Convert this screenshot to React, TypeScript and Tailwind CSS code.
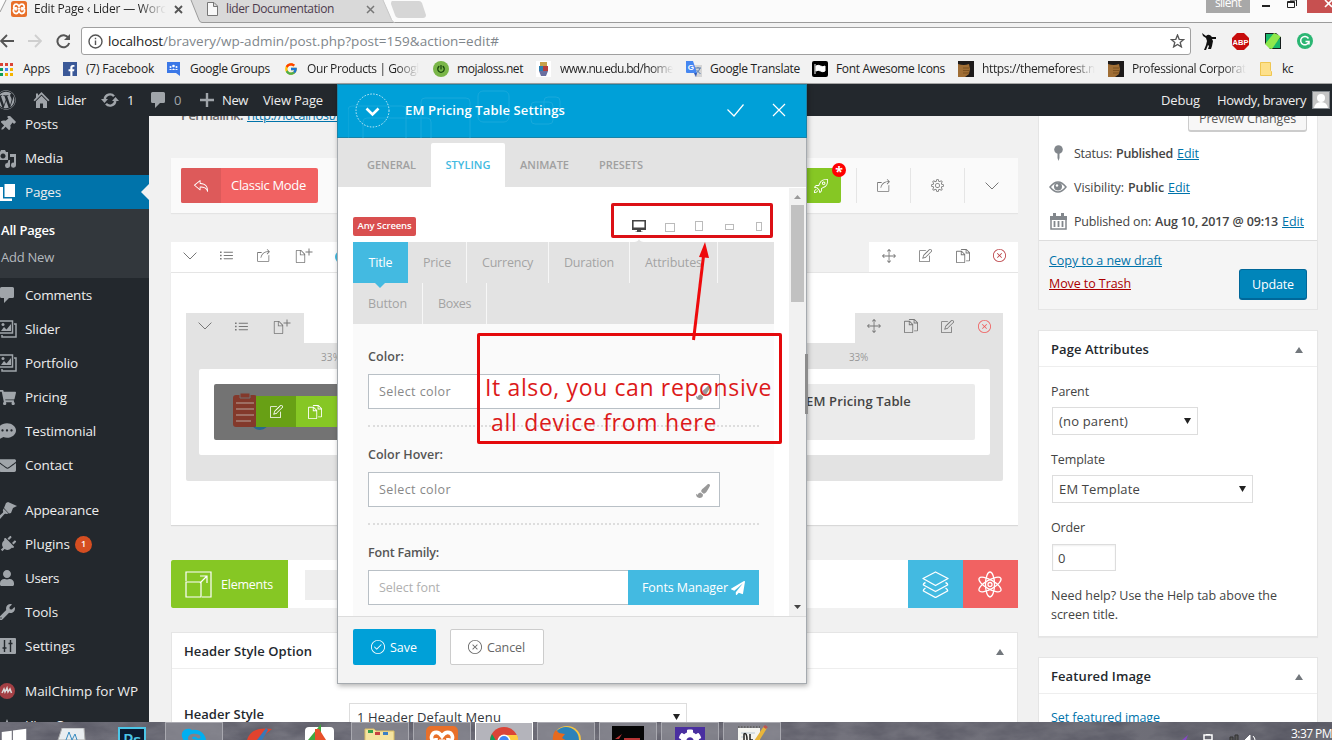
import React, { useLayoutEffect, useRef } from "react";
import {
  SlNote, SlDocs, SlClose, SlCursorMove, SlList, SlShareAlt, SlSettings,
  SlRocket, SlCheck, SlActionUndo, SlDoc,
} from "react-icons/sl";
import {
  FaWordpress, FaThumbtack, FaUser, FaWrench, FaPlug, FaEnvelope, FaShoppingCart,
  FaCommentDots, FaPaintBrush, FaPaperPlane, FaSkype, FaWindows, FaFacebookF, FaPowerOff, FaCog,
} from "react-icons/fa";
import { FcGoogle } from "react-icons/fc";

/* Single-line label that spreads its letters over the given width. */
function T({ w, c = "", children }: { w: number; c?: string; children: string }) {
  const ref = useRef<HTMLSpanElement>(null);
  useLayoutEffect(() => {
    const el = ref.current;
    if (!el) return;
    el.style.letterSpacing = "0px";
    const natural = el.getBoundingClientRect().width;
    el.style.letterSpacing = `${(w - natural) / children.length}px`;
  }, [w, children]);
  return (
    <span ref={ref} className={`inline-block shrink-0 whitespace-pre ${c}`}>
      {children}
    </span>
  );
}

/* ---------- small drawings ---------- */

const Xampp = ({ s = 16 }: { s?: number }) => (
  <svg width={s} height={s} viewBox="0 0 16 16" className="shrink-0">
    <rect width="16" height="16" rx="2.500" fill="#e8702a" />
    <path d="M5.200 3.200C6.800 3.200 7.500 4.500 8 5.200 8.500 4.500 9.200 3.200 10.800 3.200A2.400 2.400 0 0 1 12.300 7.500 2.700 2.700 0 0 1 10.800 12.500C9.200 12.500 8.500 11 8 10 7.500 11 6.800 12.500 5.200 12.500A2.700 2.700 0 0 1 3.700 7.500 2.400 2.400 0 0 1 5.200 3.200zM5 6v3.500M11 6v3.500M6.500 7.700h3" fill="none" stroke="#fff" strokeWidth="1.800" />
  </svg>
);

const Chevron = ({ c = "#777", s = 14 }: { c?: string; s?: number }) => (
  <svg width={s} height={s / 2 + 1} viewBox="0 0 14 8" fill="none" stroke={c}>
    <path d="M.6.6L7 7 13.400.6" />
  </svg>
);

const Lines = () => <SlList size={13} />;

const DocPlus = () => (
  <span className="flex shrink-0">
    <SlDoc size={13} className="-ml-1 mt-0.5" />
    <svg width="8" height="8" viewBox="0 0 8 8" stroke="#777" className="-ml-0.5">
      <path d="M4 .5v7M.5 4h7" />
    </svg>
  </span>
);

const Up = ({ c = "#72777c" }: { c?: string }) => (
  <svg width="8" height="6" viewBox="0 0 8 6" fill={c} className="shrink-0 translate-y-px"><path d="M4 0l4 6H0z" /></svg>
);
const Down = () => (
  <svg width="7" height="6" viewBox="0 0 7 6" fill="#222" className="shrink-0"><path d="M0 0h7L3.500 6z" /></svg>
);

const HomeIcon = () => (
  <svg width="17" height="16" viewBox="0 0 17 16" fill="#a0a5aa">
    <path d="M8.500 0L16.500 8.200l-1.300 1L8.500 2.600 1.800 9.200l-1.300-1L3 5.600V1.500h2v2.100z" />
    <path d="M3 9.200l5.500-5.400L14 9.200V16h-4v-4.500H7V16H3z" />
  </svg>
);
const UpdateIcon = () => (
  <svg width="18" height="14" viewBox="0 0 18 14" fill="none" stroke="#a0a5aa" strokeWidth="2.400">
    <path d="M3.700 6A5.300 5.300 0 0 1 13 3.300M14.300 8A5.300 5.300 0 0 1 5 10.700" />
    <path d="M0 6h7L3.500 10zM11 8h7l-3.500-4z" fill="#a0a5aa" stroke="none" />
  </svg>
);
const CommentIcon = ({ s = 14 }: { s?: number }) => (
  <svg width={s} height={s + 2} viewBox="0 0 14 16" fill="#a0a5aa">
    <path d="M1.500 0h11A1.500 1.500 0 0 1 14 1.500v8a1.500 1.500 0 0 1-1.500 1.500H9l-5 5v-5H1.500A1.500 1.500 0 0 1 0 9.500v-8A1.500 1.500 0 0 1 1.500 0z" />
  </svg>
);
const MediaIcon = () => (
  <svg width="20" height="19" viewBox="0 0 20 19" fill="#a0a5aa">
    <path fillRule="evenodd" d="M1 3h2l1-2h4l1 2h2v8H1zM6 4.500a2.500 2.500 0 1 0 .01 0z" />
    <path d="M13 5h6v11a2.500 2.500 0 1 1-2-2.300V8h-4zM11.500 11h1.500v5a2.500 2.500 0 1 1-2.500-2z" />
  </svg>
);
const PagesIcon = () => (
  <svg width="19" height="17" viewBox="0 0 19 17" fill="#fff">
    <path d="M6.500 0H17v13H6.500z" /><path d="M1 3h4v11.500h9V17H1z" />
  </svg>
);
const GalleryIcon = () => (
  <svg width="19" height="18" viewBox="0 0 19 18" fill="none" stroke="#a0a5aa" strokeWidth="1.500">
    <path d="M1 1h13.500v12H1zM16 4h2v13H4v-2" />
    <path d="M3 11l3-4 2.500 2.500L13 4v7z" fill="#a0a5aa" stroke="none" />
    <circle cx="5" cy="4.500" r="1.500" fill="#a0a5aa" stroke="none" />
  </svg>
);
const BrushIcon = () => (
  <svg width="19" height="17" viewBox="0 0 19 17" fill="#a0a5aa">
    <path d="M8 1l2-1 9 4-4 2-2 5-2 .5L6 6z" /><path d="M5.500 6.500l5 5-2 .5c-1-.5-1.800-.5-2.500.5L2 17l-2-2 4.500-4c.8-.8.8-1.500.3-2.500z" />
  </svg>
);
const SlidersIcon = () => (
  <svg width="17" height="16" viewBox="0 0 17 16">
    <rect width="17" height="16" rx="1" fill="#a0a5aa" />
    <path d="M5.500 2v12M3.500 10h4M11.500 2v12M9.500 5.500h4" stroke="#23282d" strokeWidth="1.400" />
  </svg>
);

/* ---------- browser chrome ---------- */

function TabStrip() {
  return (
    <div className="relative h-[23px] shrink-0 bg-[#fbfbfb]">
      <svg className="absolute left-0 top-0" width="1332" height="23" viewBox="0 0 1332 23">
        <path d="M190 0h193l9 20c.5 1 1 2.500 2 2.500H200z" fill="#d9d9d9" />
        <path d="M392 1h27q2 0 3 2l4 12q0 3-3 3h-24q-3 0-4-3l-4-11q0-3 1-3z" fill="#d6d6d6" />
        <path d="M0 12L6 0h185l8 20q1 2.500 3 3H0z" fill="#f2f2f2" />
        <path d="M0 12L6 0M191 0l8 20q1 2.500 3 2.500H1332" fill="none" stroke="#9b9b9b" />
        <path d="M383 0l8.500 19.500q1 2.500 3 3" fill="none" stroke="#c8c8c8" />
      </svg>
      <div className="relative flex h-[18px] items-center text-[12px] leading-[18px]">
        <div className="ml-[11px] mr-[7px]"><Xampp /></div>
        <div className="w-[132px] overflow-hidden bg-linear-to-r from-[#222] from-80% to-transparent bg-clip-text text-transparent">
          <T w={132}>Edit Page ‹ Lider — Worc</T>
        </div>
        <svg className="ml-[8px]" width="9" height="9" viewBox="0 0 9 9" stroke="#555" strokeWidth="1.800"><path d="M1 1l7 7M8 1L1 8" /></svg>
        <svg className="ml-[24px]" width="11" height="14" viewBox="0 0 11 14" fill="#f8f8f8" stroke="#777"><path d="M.5.5H7L10.500 4v9.500H.5zM6.500.5v4h4" /></svg>
        <T w={108} c="ml-[8px] text-[#4d3b4d]">lider Documentation</T>
        <svg className="ml-[32px]" width="9" height="9" viewBox="0 0 9 9" stroke="#777" strokeWidth="1.500"><path d="M1 1l7 7M8 1L1 8" /></svg>
        <div className="ml-auto flex h-[13px] w-[44px] justify-center self-start bg-[#a8a8a8] leading-[6px] text-white">
          <T w={26}>silent</T>
        </div>
        <div className="ml-[12px] mr-[17px] mt-[-7px] h-[2px] w-[8px] bg-[#222]" />
        <svg width="11" height="9" viewBox="0 0 11 9" fill="none" stroke="#222" className="mb-[10px] mr-[9px]"><path d="M.5 1.500h7v6h-7zM.5 2.500h7M3 0h6.500v6" /></svg>
        <div className="flex h-[13px] w-[25px] justify-end self-start overflow-hidden bg-[#c75050]">
          <svg width="8" height="8" viewBox="0 0 8 8" stroke="#fff" strokeWidth="1.600"><path d="M1 0l7 7M8 0L1 7" /></svg>
        </div>
      </div>
    </div>
  );
}

function Toolbar() {
  return (
    <div className="flex h-[36px] shrink-0 items-center bg-[#f2f2f2]">
      <svg width="14" height="14" viewBox="0 0 14 14" fill="none" stroke="#555" strokeWidth="1.800"><path d="M14 7H1M7 1L1 7l6 6" /></svg>
      <svg className="ml-[14px]" width="14" height="14" viewBox="0 0 14 14" fill="none" stroke="#cfcfcf" strokeWidth="1.800"><path d="M0 7h13M7 1l6 6-6 6" /></svg>
      <svg className="ml-[14px]" width="15" height="15" viewBox="0 0 15 15" fill="none" stroke="#555" strokeWidth="2"><path d="M12.500 4A6 6 0 1 0 13.200 9" /><path d="M14 0v6H8z" fill="#555" stroke="none" /></svg>
      <div className="ml-[10px] flex h-[28px] w-[1110px] items-center rounded-[3px] border border-[#a0a0a0] bg-white pl-[6px] pr-[5px] text-[13.500px]">
        <svg width="15" height="15" viewBox="0 0 15 15" fill="none" stroke="#555" strokeWidth="1.400"><circle cx="7.500" cy="7.500" r="6.500" /><path d="M7.500 6.500V11M7.500 3.700v1.500" /></svg>
        <T w={55} c="ml-[5px] text-[#222]">localhost</T>
        <T w={336} c="text-[#80868b]">/bravery/wp-admin/post.php?post=159&amp;action=edit#</T>
        <svg className="ml-auto" width="15" height="14" viewBox="0 0 15 14" fill="none" stroke="#555" strokeWidth="1.300"><path d="M7.500 1l1.700 4.300 4.600.2-3.600 2.900 1.200 4.500-3.900-2.500-3.900 2.500 1.200-4.500L1.200 5.500l4.600-.2z" /></svg>
      </div>
      <svg className="ml-[11px]" width="16" height="17" viewBox="0 0 16 17" fill="#111"><path d="M0 0l4 3q3-3 6 1l4 0v2l-4 0 1 2-1 5-1 3-3 0 1-3-1-1-2 5H2l2-5 1-4-1-3-3-2z" /></svg>
      <svg className="ml-[14px]" width="17" height="17" viewBox="0 0 17 17"><path d="M5 0h7l5 5v7l-5 5H5l-5-5V5z" fill="#c70d0d" /><text x="8.500" y="11.500" textAnchor="middle" fontSize="7.500" fontWeight="700" fill="#fff" fontFamily="Liberation Sans, sans-serif">ABP</text></svg>
      <svg className="ml-[16px]" width="16" height="16" viewBox="0 0 16 16"><path d="M0 0h16v16H0z" fill="#151d1c" /><path d="M1 12V1h9zM6 15L15 5v10z" fill="#17b86b" /><path d="M0 11L9 0l7 3-9 13-5-1z" fill="#8ee84c" /><path d="M0 16v-5l5 5zM16 0v4l-5-4z" fill="#f2f2f2" /></svg>
      <svg className="ml-[16px]" width="16" height="16" viewBox="0 0 16 16"><circle cx="8" cy="8" r="8" fill="#2bb673" /><path d="M11.500 5.500A4.200 4.200 0 1 0 12 8.500H8.500M12 8.500v3" fill="none" stroke="#fff" strokeWidth="1.500" /></svg>
    </div>
  );
}

const fade = "bg-linear-to-r from-[#222] from-80% to-transparent bg-clip-text text-transparent";

const Wood = () => (
  <svg width="16" height="16" viewBox="0 0 16 16"><path d="M0 0h16v16H0z" fill="#1d1a1a" /><path d="M0 3q6 2 11 0l1 5-1 5-4 3H0z" fill="#a06e35" /><path d="M5 7h6M5 9.500h6M5 12h6" stroke="#7b5120" /></svg>
);

function Bookmarks() {
  const apps = ["#db4437", "#db4437", "#db4437", "#0f9d58", "#4285f4", "#f4b400", "#0f9d58", "#f4b400", "#f4b400"];
  return (
    <div className="flex h-[25px] shrink-0 items-center border-b border-[#a5a5a5] bg-[#f2f2f2] pb-[4px] text-[12px] leading-[18px] text-[#222]">
      <div className="grid w-[13px] grid-cols-3 gap-x-[2px] gap-y-[2px]">
        {apps.map((color, i) => <i key={i} className="size-[3px]" style={{ background: color }} />)}
      </div>
      <T w={27} c="ml-[10px]">Apps</T>
      <div className="ml-[13px] flex size-[14px] items-end justify-end bg-[#3b5998] text-white"><FaFacebookF size={11} /></div>
      <T w={68} c="ml-[9px]">(7) Facebook</T>
      <svg className="ml-[13px]" width="13" height="16" viewBox="0 0 13 16"><path d="M0 1h13v14l-4-3H0z" fill="#3b78e7" /><g fill="#fff"><circle cx="3.500" cy="6" r="1" /><circle cx="6.500" cy="5" r="1.300" /><circle cx="9.500" cy="6" r="1" /><path d="M2 9q1.500-2 3 0zM5 9q1.500-3 3 0zM8 9q1.500-2 3 0z" /></g></svg>
      <T w={80} c="ml-[10px]">Google Groups</T>
      <FcGoogle size={14} className="ml-[14px]" />
      <div className={`ml-[9px] w-[112px] overflow-hidden ${fade}`}><T w={112}>Our Products | Googl</T></div>
      <div className="ml-[14px] flex size-[16px] items-center justify-center rounded-full bg-[#7ab648] text-[#17470b]"><FaPowerOff size={8} /></div>
      <T w={66} c="ml-[8px]">mojaloss.net</T>
      <svg className="ml-[13px]" width="15" height="16" viewBox="0 0 15 16"><path d="M0 0h15v16H0z" fill="#fff" /><path d="M4 1h7v4H4z" fill="#c7a14a" /><path d="M3 5h4v5H3z" fill="#2c7fb0" /><path d="M7 5h5v5H7z" fill="#b43d3d" /><path d="M3 10h9l-2 5H5z" fill="#6a6fa0" /></svg>
      <div className={`ml-[9px] w-[113px] overflow-hidden ${fade}`}><T w={113}>www.nu.edu.bd/home</T></div>
      <svg className="ml-[13px]" width="16" height="16" viewBox="0 0 16 16"><path d="M6 4h10v12H9z" fill="#d5d5d5" /><path d="M9 7h6M12 6v1M14 7q-1 4-4 5M10.500 9l4 4" stroke="#5b7fae" fill="none" /><path d="M0 0h7l4 12H1q-1 0-1-1z" fill="#4687f1" /><path d="M8 12h3l-1 4z" fill="#3059b8" /><text x="4.800" y="9" textAnchor="middle" fontSize="8" fontWeight="700" fill="#fff" fontFamily="Liberation Sans, sans-serif">G</text></svg>
      <T w={90} c="ml-[8px]">Google Translate</T>
      <svg className="ml-[12px]" width="16" height="16" viewBox="0 0 16 16"><rect width="16" height="16" rx="2" fill="#000" /><path d="M3 3v10M4 5q2-1.500 4.500 0T13 5v5q-2 1.500-4.500 0T4 10z" fill="#fff" stroke="#fff" /></svg>
      <T w={109} c="ml-[8px]">Font Awesome Icons</T>
      <div className="ml-[13px]"><Wood /></div>
      <div className={`ml-[8px] w-[113px] overflow-hidden ${fade}`}><T w={113}>https://themeforest.n</T></div>
      <div className="ml-[13px]"><Wood /></div>
      <div className={`ml-[8px] w-[114px] overflow-hidden ${fade}`}><T w={114}>Professional Corporat</T></div>
      <svg className="ml-[14px]" width="12" height="14" viewBox="0 0 12 14"><path d="M.5.5h10v8l1 1v4H.5z" fill="#fde08a" stroke="#efc652" /></svg>
      <T w={11} c="ml-[10px]">kc</T>
    </div>
  );
}

/* ---------- WordPress admin ---------- */

function AdminBar() {
  return (
    <div className="flex h-[32px] shrink-0 items-center bg-[#23282d] text-[13px] text-[#eee] [&_span]:translate-y-px">
      <FaWordpress size={20} className="-ml-[4px] text-[#a0a5aa]" />
      <div className="ml-[17px]"><HomeIcon /></div>
      <T w={29} c="ml-[7px]">Lider</T>
      <div className="ml-[15px]"><UpdateIcon /></div>
      <T w={6} c="ml-[8px]">1</T>
      <div className="ml-[18px]"><CommentIcon /></div>
      <T w={7} c="ml-[9px] text-[#a0a5aa]">0</T>
      <svg className="ml-[19px]" width="14" height="14" viewBox="0 0 14 14" stroke="#a0a5aa" strokeWidth="2.400"><path d="M7 0v14M0 7h14" /></svg>
      <T w={26} c="ml-[8px]">New</T>
      <T w={60} c="ml-[15px]">View Page</T>
      <T w={39} c="ml-auto">Debug</T>
      <T w={89} c="ml-[17px]">Howdy, bravery</T>
      <svg className="ml-[6px] mr-[2px]" width="18" height="18" viewBox="0 0 18 18"><path d="M0 0h18v18H0z" fill="#82878c" /><path d="M1 1h16v16H1z" fill="#c5c5c5" /><circle cx="9" cy="7" r="4" fill="#fff" /><path d="M2 17q1-6 7-6t7 6z" fill="#fff" /></svg>
    </div>
  );
}

function MenuItem({ icon, label, w, children }: { icon: React.ReactNode; label: string; w: number; children?: React.ReactNode }) {
  return (
    <div className="flex h-[34px] shrink-0 items-center text-[#a0a5aa]">
      <div className="-ml-[3px] flex w-[20px] shrink-0 justify-center">{icon}</div>
      <T w={w} c="ml-[8px] text-[#eee]">{label}</T>
      {children}
    </div>
  );
}

function Sidebar() {
  return (
    <div className="w-[149px] shrink-0 overflow-hidden bg-[#23282d] text-[13.500px]">
      <div className="-mt-[9px] flex flex-col">
        <MenuItem icon={<FaThumbtack size={16} className="rotate-45" />} label="Posts" w={33} />
        <MenuItem icon={<MediaIcon />} label="Media" w={38} />
        <div className="flex justify-between bg-[#0073aa]">
          <MenuItem icon={<PagesIcon />} label="Pages" w={36} />
          <svg width="8" height="34" viewBox="0 0 8 34" fill="#f1f1f1"><path d="M8 9v16L0 17z" /></svg>
        </div>
        <div className="flex h-[69px] flex-col justify-center bg-[#32373c] pl-px leading-[27px] text-[13px]">
          <T w={54} c="self-start font-semibold text-white">All Pages</T>
          <T w={53} c="self-start text-[#b4b9be]">Add New</T>
        </div>
        <MenuItem icon={<CommentIcon />} label="Comments" w={67} />
        <MenuItem icon={<GalleryIcon />} label="Slider" w={35} />
        <MenuItem icon={<GalleryIcon />} label="Portfolio" w={53} />
        <MenuItem icon={<FaShoppingCart size={17} />} label="Pricing" w={42} />
        <MenuItem icon={<FaCommentDots size={18} />} label="Testimonial" w={71} />
        <MenuItem icon={<FaEnvelope size={17} />} label="Contact" w={48} />
        <div className="h-[11px]" />
        <MenuItem icon={<BrushIcon />} label="Appearance" w={74} />
        <MenuItem icon={<FaPlug size={17} className="rotate-45" />} label="Plugins" w={45}>
          <div className="ml-[5px] flex size-[17px] items-center justify-center rounded-full bg-[#d54e21] text-[9px] font-semibold text-white">1</div>
        </MenuItem>
        <MenuItem icon={<FaUser size={16} />} label="Users" w={34} />
        <MenuItem icon={<FaWrench size={16} />} label="Tools" w={33} />
        <MenuItem icon={<SlidersIcon />} label="Settings" w={50} />
        <div className="h-[11px]" />
        <MenuItem
          icon={<svg width="16" height="16" viewBox="0 0 16 16"><circle cx="8" cy="8" r="8" fill="#a33f44" /><path d="M3 10l2-4 1 3 2-4 1 4 2-3 1.500 4" fill="none" stroke="#ddd" strokeWidth="1.500" /></svg>}
          label="MailChimp for WP" w={113}
        />
        <MenuItem icon={<svg width="10" height="12" viewBox="0 0 10 12" fill="#a0a5aa"><path d="M5 0l2 5 3-2-1 8H1L0 3l3 2z" /></svg>} label="King Composer" w={94} />
      </div>
    </div>
  );
}

const Cell = ({ children, c = "" }: { children: React.ReactNode; c?: string }) => (
  <div className={`flex w-[37px] shrink-0 items-center justify-center text-[#777] ${c}`}>{children}</div>
);

function Editor() {
  return (
    <div className="flex w-[869px] shrink-0 flex-col overflow-hidden pl-[22px]">
      <div className="-mt-[10px] flex h-[20px] shrink-0 items-center pl-[10px] text-[13px] text-[#666]">
        <T w={62} c="font-semibold">Permalink:</T>
        <T w={180} c="ml-[4px] text-[#0073aa] underline">http://localhost/bravery/pricing/</T>
      </div>

      <div className="mt-[32px] flex h-[55px] shrink-0 items-center bg-[#fafafa] pl-[10px] shadow-[0_1px_1px_rgba(0,0,0,.05)]">
        <div className="flex h-[35px] w-[137px] overflow-hidden rounded-[2px] bg-[#f16262] text-[13px] leading-[34px] text-white">
          <div className="flex w-[40px] items-center justify-center bg-[#dd5a5a]"><SlActionUndo size={14} /></div>
          <T w={75} c="ml-[10px]">Classic Mode</T>
        </div>
        <div className="relative ml-auto mr-[15px] flex h-[35px] w-[61px] items-center justify-end rounded-[2px] bg-[#86c724] pr-[13px] text-white">
          <SlRocket size={14} />
          <div className="absolute -right-[5px] -top-[5px] flex size-[14px] justify-center rounded-full bg-[#f00] text-[14px] font-bold leading-[18px]">*</div>
        </div>
        <div className="flex h-[35px] w-[54px] items-center justify-center border-l border-[#e5e5e5] text-[#777]"><SlShareAlt size={13} /></div>
        <div className="flex h-[35px] w-[54px] items-center justify-center border-l border-[#e5e5e5] text-[#777]"><SlSettings size={13} /></div>
        <div className="flex h-[35px] w-[54px] items-center justify-center border-l border-[#e5e5e5]"><Chevron /></div>
      </div>

      <div className="mt-[29px] flex h-[30px] shrink-0 justify-between">
        <div className="flex w-[300px] bg-white pb-[3px]">
          <Cell><Chevron /></Cell><Cell><Lines /></Cell><Cell><SlShareAlt size={13} /></Cell>
          <Cell c="ml-[5px]"><DocPlus /></Cell>
          <i className="ml-[11px] mt-[9px] size-[12px] rounded-full bg-[#43bae1]" />
        </div>
        <div className="flex w-[149px] bg-white pb-[3px] pl-px">
          <Cell><SlCursorMove size={14} /></Cell><Cell><SlNote size={13} /></Cell><Cell><SlDocs size={14} /></Cell>
          <Cell><SlClose size={13} className="text-[#b8383d]" /></Cell>
        </div>
      </div>

      <div className="flex h-[253px] shrink-0 flex-col border-t border-[#e5e5e5] bg-white px-[15px] pt-[40px] shadow-[0_1px_1px_rgba(0,0,0,.1)]">
        <div className="flex h-[30px] shrink-0 justify-between">
          <div className="flex w-[118px] bg-[#e3e3e3] pb-[4px]">
            <Cell><Chevron /></Cell><Cell><Lines /></Cell><Cell c="ml-[5px]"><DocPlus /></Cell>
          </div>
          <div className="flex w-[148px] bg-[#e3e3e3] pb-[4px]">
            <Cell><SlCursorMove size={14} /></Cell><Cell><SlDocs size={14} /></Cell><Cell><SlNote size={13} /></Cell>
            <Cell><SlClose size={13} className="text-[#f05b5b]" /></Cell>
          </div>
        </div>
        <div className="flex h-[138px] flex-col rounded-b-[2px] bg-[#e3e3e3] px-[13px] pb-[26px]">
          <div className="flex h-[26px] shrink-0 items-center justify-between pl-[122px] pr-[122px] pt-[2px] text-[10px] text-[#999]">
            <T w={20}>33%</T><T w={19}>33%</T>
          </div>
          <div className="flex flex-1 justify-between rounded-[2px] bg-white p-[15px]">
            <div className="flex w-[300px] rounded-[2px] bg-[#737373] pl-[18px]">
              <svg className="mt-[8px] shrink-0" width="38" height="40" viewBox="0 0 38 40">
                <circle cx="28" cy="29" r="9" fill="#286a8c" />
                <rect x="1" y="3" width="24" height="32" rx="3" fill="#83392b" />
                <path d="M8 1h10v5H8z" fill="#83392b" stroke="#737373" />
                <path d="M4 11h18M4 17h18M4 23h18M4 29h15" stroke="#a88178" strokeWidth="1.300" />
              </svg>
              <div className="-ml-[14px] mt-[12px] flex h-[31px] text-white">
                <div className="relative flex w-[40px] items-center justify-center bg-[#68a015]"><SlNote size={13} /></div>
                <div className="relative flex w-[60px] items-center bg-[#86c724] pl-[12px]"><SlDocs size={14} /></div>
              </div>
            </div>
            <div className="flex w-[300px] rounded-[2px] bg-[#ebebeb] pl-[131px] pt-[8px] text-[13px] font-semibold text-[#444]">
              <T w={105}>EM Pricing Table</T>
            </div>
          </div>
        </div>
      </div>

      <div className="mt-[35px] flex h-[48px] w-[847px] shrink-0 bg-white text-white">
        <div className="flex w-[117px] items-center rounded-l-[2px] bg-[#86c724] pl-[14px] text-[12.500px] font-medium">
          <svg width="27" height="27" viewBox="0 0 27 27" fill="none" stroke="#fff" strokeWidth="1.200"><path d="M1 10V1h25v25H17M1 11h15v15H1zM15 5h7v7M22 5l-7 7" /></svg>
          <T w={52} c="ml-[9px] translate-y-px">Elements</T>
        </div>
        <div className="ml-[17px] mt-[10px] h-[30px] w-[440px] bg-[#eee]" />
        <div className="ml-auto flex w-[55px] items-center justify-center bg-[#43bae1]">
          <svg width="27" height="27" viewBox="0 0 27 27" fill="none" stroke="#fff" strokeWidth="1.400" strokeLinejoin="round">
            <path d="M13.500 1L26 7.500 13.500 14.500 1 7.500zM3.500 11.500Q1 12.500 1.500 14L13.500 20.500 25.500 14Q26 12.500 23.500 11.500M3.500 17Q1 18.500 1.500 20L13.500 26.500 25.500 20Q26 18.500 23.500 17" />
          </svg>
        </div>
        <div className="flex w-[55px] items-center justify-center bg-[#f16262] pr-[2px]">
          <svg width="26" height="27" viewBox="-13 -13.500 26 27" fill="none" stroke="#fff" strokeWidth="1.300">
            <ellipse rx="4.500" ry="12.500" /><ellipse rx="4.500" ry="12.500" transform="rotate(60)" /><ellipse rx="4.500" ry="12.500" transform="rotate(-60)" /><circle r="2" />
          </svg>
        </div>
      </div>

      <div className="mt-[24px] flex h-[200px] w-[847px] shrink-0 flex-col border border-[#e5e5e5] bg-white text-[13px] text-[#23282d] [&_span]:translate-y-px">
        <div className="flex h-[36px] shrink-0 items-center justify-between border-b border-[#eee] pl-[12px] pr-[13px] font-semibold">
          <T w={128}>Header Style Option</T><Up />
        </div>
        <div className="flex pl-[12px] pt-[34px]">
          <T w={80} c="mt-[1px] font-semibold">Header Style</T>
          <div className="ml-[85px] flex h-[28px] w-[338px] items-center justify-between border border-[#ddd] pl-[7px] pr-[6px] text-[#32373c]">
            <T w={144}>1 Header Default Menu</T><div><Down /></div>
          </div>
        </div>
      </div>
    </div>
  );
}

function SideColumn() {
  return (
    <div className="ml-[20px] flex w-[280px] shrink-0 flex-col text-[12.500px] text-[#444]">
      <div className="flex h-[194px] shrink-0 flex-col border border-t-0 border-[#e5e5e5] bg-white">
        <div className="flex h-[20px] shrink-0 justify-end pr-[10px]">
          <div className="-mt-[11px] flex h-[27px] w-[119px] items-center justify-center rounded-[3px] border border-b-2 border-[#ccc] bg-[#f7f7f7] text-[#555]"><T w={97} c="translate-y-px">Preview Changes</T></div>
        </div>
        <div className="flex h-[34px] items-center [&_span]:translate-y-px">
          <svg className="ml-[15px] mr-[11px]" width="9" height="16" viewBox="0 0 9 16" fill="#82878c"><circle cx="4.500" cy="4.500" r="4.300" /><path d="M3.500 8h2v5l-1 3-1-3z" /></svg>
          <T w={38}>Status:</T><T w={57} c="ml-[4px] font-semibold">Published</T><T w={22} c="ml-[4px] text-[#0073aa] underline">Edit</T>
        </div>
        <div className="flex h-[34px] items-center [&_span]:translate-y-px">
          <svg className="ml-[10px] mr-[7px]" width="18" height="12" viewBox="0 0 18 12"><path d="M1 6q8-10 16 0-8 10-16 0z" fill="none" stroke="#82878c" strokeWidth="1.500" /><circle cx="9" cy="5.500" r="4" fill="#82878c" /><circle cx="8" cy="4.500" r="1.200" fill="#fff" /></svg>
          <T w={50}>Visibility:</T><T w={36} c="ml-[4px] font-semibold">Public</T><T w={22} c="ml-[4px] text-[#0073aa] underline">Edit</T>
        </div>
        <div className="flex h-[34px] items-center [&_span]:translate-y-px">
          <svg className="ml-[11px] mr-[7px]" width="17" height="17" viewBox="0 0 17 17"><path d="M1 5h15v11H1z" fill="none" stroke="#82878c" strokeWidth="1.500" /><path d="M0 3h17v4H0zM3 0h3v3H3zM11 0h3v3h-3z" fill="#82878c" /><path d="M4.500 8v6M8.500 8v6M12.500 8v6" stroke="#82878c" strokeWidth="1.800" /></svg>
          <T w={77}>Published on:</T><T w={123} c="ml-[4px] font-semibold">Aug 10, 2017 @ 09:13</T><T w={22} c="ml-[4px] text-[#0073aa] underline">Edit</T>
        </div>
        <div className="mt-[2px] flex flex-1 justify-between border-t border-[#ddd] bg-[#f5f5f5] pl-[10px] pr-[10px]">
          <div className="flex flex-col items-start pt-[8px] leading-[23px]">
            <T w={113} c="text-[#0073aa] underline">Copy to a new draft</T>
            <T w={82} c="text-[#a00] underline">Move to Trash</T>
          </div>
          <div className="mt-[28px] flex h-[31px] w-[68px] items-center justify-center rounded-[3px] border border-b-2 border-[#006799] bg-[#0085ba] font-medium text-white"><T w={42} c="translate-y-px">Update</T></div>
        </div>
      </div>

      <div className="mt-[20px] flex h-[307px] shrink-0 flex-col items-start border border-[#e5e5e5] bg-white pl-[12px] shadow-[0_1px_1px_rgba(0,0,0,.04)] [&_span]:translate-y-px">
        <div className="-ml-[12px] flex h-[36px] w-[278px] shrink-0 items-center justify-between border-b border-[#eee] pl-[12px] pr-[14px] text-[13px] font-semibold text-[#23282d]">
          <T w={98}>Page Attributes</T><Up />
        </div>
        <T w={38} c="mt-[14px] font-medium leading-[20px]">Parent</T>
        <div className="ml-px mt-[6px] flex h-[28px] w-[146px] items-center justify-between border border-[#ddd] pl-[6px] pr-[6px] text-[13px]"><T w={69}>(no parent)</T><Down /></div>
        <T w={54} c="mt-[14px] font-medium leading-[20px]">Template</T>
        <div className="ml-px mt-[6px] flex h-[28px] w-[201px] items-center justify-between border border-[#ddd] pl-[6px] pr-[6px] text-[13px]"><T w={81}>EM Template</T><Down /></div>
        <T w={34} c="mt-[14px] font-medium leading-[20px]">Order</T>
        <div className="ml-px mt-[7px] flex h-[27px] w-[64px] items-center border border-[#ddd] pl-[5px] text-[13px] shadow-[inset_0_1px_2px_rgba(0,0,0,.07)]"><T w={8}>0</T></div>
        <T w={226} c="mt-[14px] leading-[19px]">Need help? Use the Help tab above the</T>
        <T w={67} c="leading-[19px]">screen title.</T>
      </div>

      <div className="mt-[20px] flex h-[120px] shrink-0 flex-col border border-[#e5e5e5] bg-white [&_span]:translate-y-px">
        <div className="flex h-[36px] shrink-0 items-center justify-between border-b border-[#eee] pl-[12px] pr-[14px] text-[13px] font-semibold text-[#23282d]">
          <T w={100}>Featured Image</T><Up />
        </div>
        <T w={109} c="ml-[12px] mt-[13px] self-start leading-[20px] text-[#0073aa] underline">Set featured image</T>
      </div>
    </div>
  );
}

/* ---------- settings dialog ---------- */

function Tab({ label, w, cw }: { label: string; w: number; cw: number }) {
  return (
    <div className="flex h-[41px] justify-center border-r border-[#f7f7f7] leading-[41px]" style={{ width: cw }}>
      <T w={w}>{label}</T>
    </div>
  );
}

const Field = ({ c = "", children }: { c?: string; children: React.ReactNode }) => (
  <div className={`flex h-[35px] items-center justify-between border border-[#b9c0c6] bg-white pl-[10px] pr-[9px] pt-[2px] text-[#888] ${c}`}>{children}</div>
);

function Dialog() {
  return (
    <div className="absolute left-[337px] top-[84px] flex h-[600px] w-[470px] flex-col border border-[#a5aaaf] bg-white text-[12.500px] shadow-[1px_2px_5px_rgba(0,0,0,.3)]">
      <div className="relative -mx-px -mt-px flex h-[54px] shrink-0 items-center border border-[#1983a8] bg-[#00a0d8] pb-[2px] pl-[17px] pr-[20px] text-white">
        <svg className="absolute left-[10px] top-[5px]" width="220" height="48" viewBox="0 0 220 48" fill="none" stroke="#18a9dc">
          <path d="M0 48V20q0-4 4-4h50q4 0 4 4v28M15 48V32q0-4 4-4h60q4 0 4 4v16M73 48V12q0-4 4-4h41q4 0 4 4v36" />
          <rect x="130" y="1" width="31" height="31" rx="5" /><rect x="183" y="12" width="22" height="22" rx="4" /><rect x="196" y="7" width="16" height="16" rx="4" />
        </svg>
        <svg className="relative" width="35" height="35" viewBox="0 0 35 35" fill="none" stroke="#fff"><circle cx="17.500" cy="17.500" r="16.500" strokeDasharray="1.500 1.500" strokeWidth=".8" /><path d="M11.500 15.500l6 6 6-6" strokeWidth="2.600" /></svg>
        <T w={160} c="relative ml-[15px] translate-y-px text-[13px] font-semibold">EM Pricing Table Settings</T>
        <svg className="relative ml-auto" width="17" height="13" viewBox="0 0 17 13" fill="none" stroke="#fff" strokeWidth="1.200"><path d="M.5 5.500L7 12 16.500.5" /></svg>
        <svg className="relative ml-[28px]" width="14" height="14" viewBox="0 0 14 14" stroke="#fff" strokeWidth="1.200"><path d="M1 1l12 12M13 1L1 13" /></svg>
      </div>

      <div className="flex h-[49px] shrink-0 items-end bg-[#e3e3e3] pl-[29px] text-[11px] font-semibold leading-[43px] text-[#a0a0a0]">
        <T w={49} c="-translate-y-px">GENERAL</T>
        <div className="ml-[15px] flex h-[44px] w-[74px] justify-center rounded-t-[2px] bg-white text-[#43bae1]"><T w={45}>STYLING</T></div>
        <T w={49} c="ml-[15px] -translate-y-px">ANIMATE</T>
        <T w={44} c="ml-[30px] -translate-y-px">PRESETS</T>
      </div>

      <div className="flex h-[429px] shrink-0 overflow-hidden">
        <div className="flex w-[451px] shrink-0 flex-col pl-[15px] pr-[15px]">
          <div className="flex h-[55px] shrink-0 items-start pt-[30px]">
            <div className="flex h-[19px] w-[63px] items-center justify-center rounded-[2px] bg-[#d94f4f] text-[9.500px] font-semibold text-white"><T w={54}>Any Screens</T></div>
            <svg className="ml-auto" width="142" height="26" viewBox="0 0 142 26" fill="none" stroke="#bbb">
              <path d="M.8 3.800h12.400v8H.8z" stroke="#444" strokeWidth="1.600" /><path d="M0 10.500h14V13H0zM5 13h4v1.500h1.500V15h-7v-.5H5z" fill="#444" stroke="none" />
              <path d="M2 25q4 0 5-3 1 3 5 3z" fill="#e3e3e3" stroke="none" />
              <rect x="33.500" y="6.500" width="9" height="8" /><rect x="63.500" y="4.500" width="7" height="9" /><rect x="93.500" y="7.500" width="8" height="5" /><rect x="124.500" y="5.500" width="5" height="8" />
            </svg>
          </div>
          <div className="h-[82px] shrink-0 bg-[#e3e3e3] text-[12.500px] leading-[41px] text-[#a3a3a3]">
            <div className="flex">
              <div className="relative flex w-[55px] justify-center bg-[#43bae1] text-white">
                <T w={24} c="font-medium">Title</T>
                <svg className="absolute left-[22px] top-[41px]" width="10" height="5" viewBox="0 0 10 5" fill="#43bae1"><path d="M0 0h10L5 5z" /></svg>
              </div>
              <Tab label="Price" w={28} cw={59} /><Tab label="Currency" w={51} cw={82} />
              <Tab label="Duration" w={50} cw={81} /><Tab label="Attributes" w={57} cw={88} />
            </div>
            <div className="flex"><Tab label="Button" w={39} cw={70} /><Tab label="Boxes" w={33} cw={64} /></div>
          </div>
          <div className="flex flex-1 flex-col bg-[#fafafa] px-[15px] pt-[22px] text-[#555]">
            <T w={36} c="translate-y-px self-start font-semibold leading-[20px]">Color:</T>
            <Field c="mt-[8px] w-[352px]"><T w={72}>Select color</T><FaPaintBrush size={14} className="text-[#999]" /></Field>
            <div className="mt-[16px] h-[2px] border-b-2 border-dotted border-[#ddd]" />
            <T w={75} c="mt-[17px] translate-y-px self-start font-semibold leading-[20px]">Color Hover:</T>
            <Field c="mt-[8px] w-[352px]"><T w={72}>Select color</T><FaPaintBrush size={14} className="text-[#999]" /></Field>
            <div className="mt-[16px] h-[2px] border-b-2 border-dotted border-[#ddd]" />
            <T w={71} c="mt-[17px] translate-y-px self-start font-semibold leading-[20px]">Font Family:</T>
            <div className="mt-[8px] flex">
              <Field c="w-[260px] border-r-0"><T w={61} c="text-[#b0b0b0]">Select font</T></Field>
              <div className="flex h-[35px] flex-1 items-center bg-[#43bae1] pl-[14px] text-white"><T w={86} c="translate-y-px font-medium">Fonts Manager</T><FaPaperPlane size={14} className="ml-[3px]" /></div>
            </div>
          </div>
        </div>
        <div className="mt-px flex w-[17px] flex-col items-center bg-[#f1f1f1]">
          <div className="flex h-[17px] items-center"><svg width="7" height="4" viewBox="0 0 7 4" fill="#999"><path d="M3.500 0L7 4H0z" /></svg></div>
          <div className="h-[97px] w-[13px] bg-[#c1c1c1]" />
          <svg className="mb-[7px] mt-auto" width="7" height="4" viewBox="0 0 7 4" fill="#444"><path d="M0 0h7L3.500 4z" /></svg>
        </div>
      </div>

      <div className="flex flex-1 border-t border-[#ddd] bg-[#f3f3f3] pl-[15px] pt-[12px] [&_span]:translate-y-px">
        <div className="flex h-[36px] w-[83px] items-center rounded-[2px] bg-[#00a0d8] pl-[18px] font-medium text-white"><SlCheck size={14} /><T w={27} c="ml-[5px]">Save</T></div>
        <div className="ml-[14px] flex h-[36px] w-[94px] items-center rounded-[2px] border border-[#ccc] bg-white pl-[17px] text-[#666]"><SlClose size={14} /><T w={38} c="ml-[5px]">Cancel</T></div>
      </div>
    </div>
  );
}

/* ---------- annotations drawn over the page ---------- */

function Annotations() {
  return (
    <>
      <div className="absolute left-[805px] top-[354px] h-[60px] w-[3px] bg-[#8c8c8c]" />
      <div className="absolute left-[611px] top-[203px] h-[35px] w-[162px] rounded-[2px] border-3 border-[#dc1015]" />
      <div className="absolute left-[477px] top-[333px] flex h-[111px] w-[305px] flex-col items-start rounded-[2px] border-3 border-[#e4090c] pl-[5px] pt-[34px] text-[23px] leading-[35px] text-[#dc1a1a]">
        <T w={287}>It also, you can reponsive</T>
        <T w={226} c="ml-[6px]">all device from here</T>
      </div>
      <svg className="absolute left-[685px] top-[238px]" width="30" height="104" viewBox="0 0 30 104"><path d="M8.500 102L18.500 18" stroke="#ee0a0c" strokeWidth="3" /><path d="M20 4l4 16-10-1z" fill="#ee0a0c" /></svg>
    </>
  );
}

/* ---------- Windows taskbar ---------- */

const TaskButton = ({ children, c = "bg-[#8b8b94]/70 border-[#a9a9b0]" }: { children?: React.ReactNode; c?: string }) => (
  <div className={`mr-[4px] flex h-[18px] w-[58px] shrink-0 justify-center border border-b-0 ${c}`}>{children}</div>
);

function Taskbar() {
  return (
    <div className="relative flex h-[18px] shrink-0 overflow-hidden bg-linear-to-r from-[#72727c] via-[#777680] to-[#6b6b74] text-white">
      <svg className="absolute left-0 top-0" width="1332" height="18" viewBox="0 0 1332 18">
        <filter id="grain" colorInterpolationFilters="sRGB"><feTurbulence type="fractalNoise" baseFrequency=".03 .07" numOctaves="4" seed="5" /><feColorMatrix values="0 0 0 0 .28  0 0 0 0 .28  0 0 0 0 .33  0 0 0 1 -.3" /></filter>
        <rect width="1332" height="18" filter="url(#grain)" />
      </svg>
      <div className="relative flex w-full">
        <FaWindows size={28} className="mt-[5px] shrink-0" />
        <svg className="ml-[28px] mt-[6px] shrink-0" width="30" height="12" viewBox="0 0 30 12"><path d="M6 0h22l1 12H2z" fill="#e9edf0" stroke="#aaa" /><path d="M10 12l3-8 3 8 3-6 2 6" stroke="#378bc0" fill="none" /></svg>
        <div className="ml-[32px] mt-[5px] flex h-[28px] w-[28px] shrink-0 justify-center border-2 border-[#4cc6e8] bg-[#0b1a30] text-[17px] font-semibold leading-[21px] text-[#4cc6e8]"><T w={18}>Ps</T></div>
        <TaskButton c="ml-[19px] bg-[#8b8b94]/70 border-[#a9a9b0]"><FaSkype size={29} className="mt-[4px] text-[#00aff0]" /></TaskButton>
        <svg className="ml-[18px] mt-[4px] shrink-0" width="30" height="14" viewBox="0 0 30 14"><path d="M2 14Q6 0 27 3L16 12l-4 2z" fill="#e1432e" /><path d="M12 14L21 2l2 2-6 10z" fill="#3879b7" /></svg>
        <svg className="ml-[30px] mt-[2px] shrink-0" width="30" height="16" viewBox="0 0 30 16"><rect y="3" width="29" height="28" rx="4" fill="#fff" /><path d="M3 16L16 0v8l-6 8z" fill="#3fa83e" /><path d="M10 5h4l7 11H10z" fill="#e8502a" /></svg>
        <TaskButton c="ml-[16px] bg-[#8b8b94]/70 border-[#a9a9b0]"><svg width="32" height="18" viewBox="0 0 32 18"><path d="M1 6h9l2 2h18v10H1z" fill="#f4e3a0" stroke="#d9bd63" /><path d="M4 7h5v3H4z" fill="#35a04b" /><path d="M11 9h5v3h-5z" fill="#c94040" /><path d="M19 9h5v3h-5z" fill="#3c7fc4" /></svg></TaskButton>
        <TaskButton><div className="mt-[3px]"><Xampp s={32} /></div></TaskButton>
        <TaskButton c="border-white bg-[#b4b4bb]"><svg className="mt-[4px]" width="28" height="28" viewBox="0 0 28 28"><circle cx="14" cy="14" r="14" fill="#db4437" /><path d="M2 7l6 10 6 11A14 14 0 0 1 2 7z" fill="#0f9d58" /><path d="M14 8h13a14 14 0 0 1-13 20l6-11z" fill="#ffcd40" /><circle cx="14" cy="14" r="6.500" fill="#fff" /><circle cx="14" cy="14" r="5" fill="#4285f4" /></svg></TaskButton>
        <TaskButton><svg className="mt-[3px]" width="29" height="29" viewBox="0 0 29 29"><circle cx="15" cy="14" r="14" fill="#f5c542" /><circle cx="14" cy="14" r="13" fill="#2b82b9" /><path d="M1 16Q0 8 4 4l3 3 6 1-3 4 5 3-3 13Q2 27 1 16z" fill="#e66a1f" /></svg></TaskButton>
        <TaskButton><svg className="mt-[3px]" width="32" height="15" viewBox="0 0 32 15"><path d="M0 0h32v15H0z" fill="#050505" /><path d="M3 13l7-5-3 5zM12 12h16v2H12z" fill="#b73434" /></svg></TaskButton>
        <TaskButton><div className="mt-[4px] flex h-[30px] w-[30px] justify-center bg-[#4a2fa0]"><FaCog size={24} className="mt-[2px]" /></div></TaskButton>
        <TaskButton><svg className="mt-[2px]" width="32" height="16" viewBox="0 0 32 16"><path d="M2 3h22v13H2z" fill="#f4f4f0" /><path d="M2 2h22" stroke="#666" strokeWidth="2" strokeDasharray="1.500 1.500" /><path d="M5 8h14M5 12h3" stroke="#b9c8d4" /><path d="M8 15V9q3-2 3 6M14 9v6h3" stroke="#222" fill="none" strokeWidth="1.500" /><path d="M18 16L28 1l3 2-8 13z" fill="#e8b53a" /><path d="M27 2l2-2 3 2-2 2z" fill="#b55" /></svg></TaskButton>
        <svg className="ml-auto mt-[12px] shrink-0" width="76" height="6" viewBox="0 0 76 6"><path d="M0 6l6-5-2 5z" fill="#8548c4" /><path d="M22 1h8v5h-8zM24 0h4" fill="none" stroke="#fff" strokeWidth="1.500" /><path d="M48 6V3h3v3M53 6V1h3v5" stroke="#333" fill="#555" /><path d="M63 6l5-5v5M71 2q2 2 2 4" stroke="#fff" fill="#fff" /></svg>
        <T w={41} c="ml-[33px] mt-[3px] text-[12px] leading-[18px]">3:37 PM</T>
      </div>
    </div>
  );
}

export default function App() {
  return (
    <div className="relative flex h-[740px] w-[1332px] flex-col overflow-hidden bg-[#f1f1f1] font-['Open_Sans','Noto_Sans',sans-serif]">
      <TabStrip />
      <Toolbar />
      <Bookmarks />
      <AdminBar />
      <div className="flex h-[606px] shrink-0 overflow-hidden">
        <Sidebar />
        <Editor />
        <SideColumn />
      </div>
      <Dialog />
      <Annotations />
      <Taskbar />
    </div>
  );
}
